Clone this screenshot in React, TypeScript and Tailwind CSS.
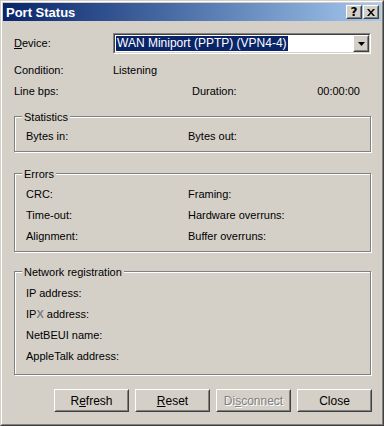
import React from 'react';

const raised =
  'border border-t-white border-l-white border-r-[#404040] border-b-[#404040] bg-[#d4d0c8]';
const raisedInner = 'border border-t-[#d4d0c8] border-l-[#d4d0c8] border-r-[#808080] border-b-[#808080]';
const etched = 'border border-[#808080] shadow-[1px_1px_0_#fff,inset_1px_1px_0_#fff]';

const TitleButton = ({ children }: { children: React.ReactNode }) => (
  <div className={`w-[16px] h-[14px] ${raised}`}>
    <div className={`w-full h-full ${raisedInner} flex items-center justify-center`}>{children}</div>
  </div>
);

const Group = ({
  title,
  className,
  children,
}: {
  title: string;
  className: string;
  children: React.ReactNode;
}) => (
  <div className={`relative ml-[11px] mr-[10px] ${etched} ${className}`}>
    <span className="absolute left-[7px] top-0 -translate-y-1/2 bg-[#d4d0c8] px-[2px] leading-[13px]">
      {title}
    </span>
    {children}
  </div>
);

const Pair = ({ left, right }: { left: React.ReactNode; right?: React.ReactNode }) => (
  <div className="flex items-center h-[21px] pl-[11px]">
    <span className="w-[162px]">{left}</span>
    {right && <span>{right}</span>}
  </div>
);

const Button = ({ children, disabled }: { children: React.ReactNode; disabled?: boolean }) => (
  <div className={`w-[75px] h-[23px] ${raised}`}>
    <div
      className={`w-full h-full ${raisedInner} flex items-center justify-center text-[12px] ${
        disabled ? 'text-[#808080] [text-shadow:1px_1px_0_#fff]' : 'text-black'
      }`}
    >
      {children}
    </div>
  </div>
);

export default function App() {
  return (
    <div className="w-[384px] h-[426px] bg-[#d4d0c8] border border-t-[#d4d0c8] border-l-[#d4d0c8] border-r-[#404040] border-b-[#404040] font-['Liberation_Sans',Arial,sans-serif] text-[11px] text-black">
      <div className="h-full border border-t-white border-l-white border-r-[#808080] border-b-[#808080] p-px flex flex-col">
        {/* title bar */}
        <div className="h-[18px] shrink-0 flex items-center bg-linear-to-r from-[#0a246a] to-[#a6caf0] pl-[3px] pr-[2px]">
          <span className="text-white font-bold text-[13px] leading-none">Port Status</span>
          <div className="ml-auto flex">
            <TitleButton>
              <span className="font-bold text-[12px] leading-none font-['DejaVu_Sans',sans-serif]">?</span>
            </TitleButton>
            <div className="w-[1px]" />
            <TitleButton>
              <svg width="8" height="7" viewBox="0 0 8 7">
                <path d="M0 0h2l2 2.5L6 0h2L5 3.5 8 7H6L4 4.5 2 7H0l3-3.5z" fill="#000" />
              </svg>
            </TitleButton>
          </div>
        </div>

        {/* device */}
        <div className="flex items-center mt-[12px] pl-[11px] h-[21px]">
          <span className="w-[99px]">
            <span className="underline">D</span>evice:
          </span>
          <div className="w-[258px] h-[21px] border border-t-[#808080] border-l-[#808080] border-r-white border-b-white">
            <div className="w-full h-full border border-t-[#404040] border-l-[#404040] border-r-[#d4d0c8] border-b-[#d4d0c8] bg-white flex items-center pl-[1px]">
              <span className="bg-[#0a246a] text-white text-[12px] leading-[15px] px-[1px]">
                WAN Miniport (PPTP) (VPN4-4)
              </span>
              <div className={`ml-auto w-[16px] h-[17px] ${raised}`}>
                <div className={`w-full h-full ${raisedInner} flex items-center justify-center`}>
                  <svg width="7" height="4" viewBox="0 0 7 4">
                    <path d="M0 0h7L3.5 4z" fill="#000" />
                  </svg>
                </div>
              </div>
            </div>
          </div>
        </div>

        {/* condition / line */}
        <div className="flex items-center mt-[8px] h-[16px] pl-[11px]">
          <span className="w-[99px]">Condition:</span>
          <span>Listening</span>
        </div>
        <div className="flex items-center mt-[5px] h-[16px] pl-[11px] pr-[21px]">
          <span className="w-[178px]">Line bps:</span>
          <span>Duration:</span>
          <span className="ml-auto">00:00:00</span>
        </div>

        <Group title="Statistics" className="mt-[17px] h-[36px] pt-[9px]">
          <Pair left="Bytes in:" right="Bytes out:" />
        </Group>

        <Group title="Errors" className="mt-[21px] h-[79px] pt-[10px]">
          <Pair left="CRC:" right="Framing:" />
          <Pair left="Time-out:" right="Hardware overruns:" />
          <Pair left="Alignment:" right="Buffer overruns:" />
        </Group>

        <Group title="Network registration" className="mt-[19px] h-[104px] pt-[11px]">
          <Pair left="IP address:" />
          <Pair
            left={
              <>
                IP<span className="font-bold text-[#808080]">X</span> address:
              </>
            }
          />
          <Pair left="NetBEUI name:" />
          <Pair left="AppleTalk address:" />
        </Group>

        <div className="flex justify-end gap-[6px] mt-[14px] pr-[9px]">
          <Button>
            R<span className="underline">e</span>fresh
          </Button>
          <Button>
            <span className="underline">R</span>eset
          </Button>
          <Button disabled>
            Di<span className="underline">s</span>connect
          </Button>
          <Button>Close</Button>
        </div>
      </div>
    </div>
  );
}
